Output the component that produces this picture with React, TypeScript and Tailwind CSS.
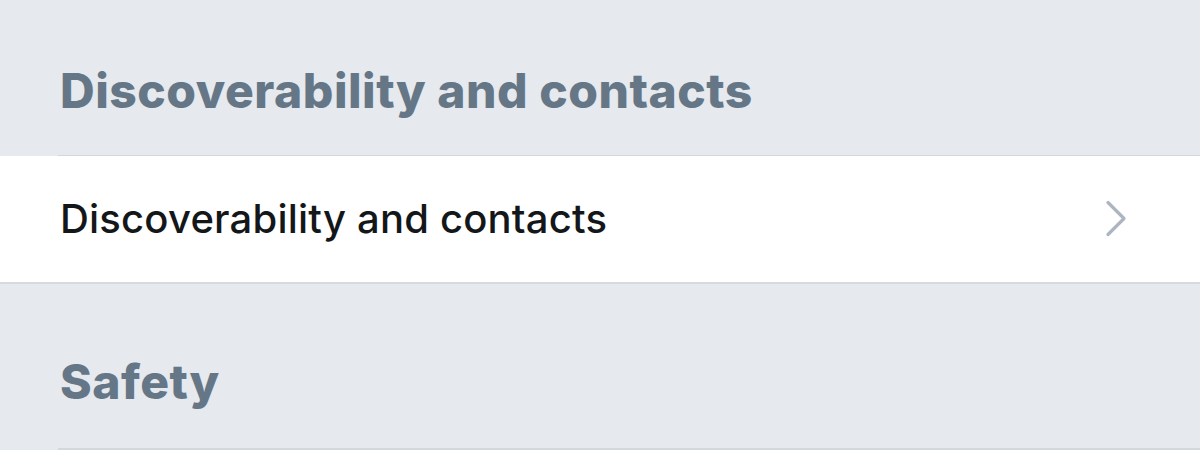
import React from "react";

function Chevron() {
  return (
    <svg width="26" height="42" viewBox="0 0 26 42" fill="none" className="shrink-0">
      <path
        d="M5 4.5 L21 20.5 L5 36.5"
        stroke="#adb6c0"
        strokeWidth="3.2"
        strokeLinecap="round"
        strokeLinejoin="round"
      />
    </svg>
  );
}

function SectionHeader({ title, className }: { title: string; className: string }) {
  return (
    <div className={`bg-[#e6e9ee] pl-[60px] ${className}`}>
      <h2 className="text-[48px] leading-[48px] font-extrabold tracking-[0.5px] text-[#657786]">
        {title}
      </h2>
    </div>
  );
}

export default function App() {
  return (
    <div
      className="w-[1200px] h-[457px] overflow-hidden bg-[#e6e9ee]"
      style={{ fontFamily: "Inter, 'Noto Sans', sans-serif" }}
    >
      <SectionHeader title="Discoverability and contacts" className="h-[155px] pt-[67px]" />
      <div className="bg-[#e6e9ee] pl-[58px]">
        <div className="h-px bg-[#d3d7dc]" />
      </div>
      <div className="flex h-[126px] items-center justify-between bg-white pl-[60px] pr-[71px]">
        <span className="text-[40px] leading-[40px] font-medium tracking-[0.2px] text-[#14171a]">
          Discoverability and contacts
        </span>
        <Chevron />
      </div>
      <div className="h-[2px] bg-[#d6d9de]" />
      <SectionHeader title="Safety" className="h-[164px] pt-[74px]" />
      <div className="bg-[#e6e9ee] pl-[58px]">
        <div className="h-[2px] bg-[#d3d7dc]" />
      </div>
      <div className="h-[20px] bg-white" />
    </div>
  );
}
